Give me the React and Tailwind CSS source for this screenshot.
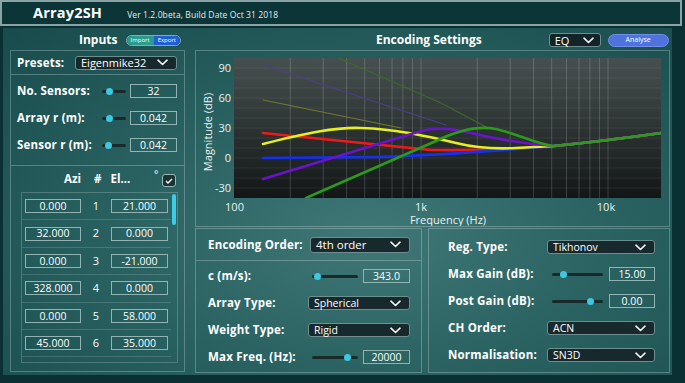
import React from "react";

const F = { fontFamily: '"Open Sans", "Liberation Sans", sans-serif' };

function Chevron({ className = "" }) {
  return (
    <svg width="11" height="7" viewBox="0 0 11 7" className={className}>
      <path d="M1 1.2 L5.5 5.5 L10 1.2" fill="none" stroke="#f2f6f6" strokeWidth="1.6" strokeLinecap="round" strokeLinejoin="round" />
    </svg>
  );
}

function Dropdown({ label, w, h = "h-[14px]", text = "text-[10.5px]" }) {
  return (
    <div className={`${w} ${h} ${text} flex items-center justify-between rounded-[3px] border border-[#6f8e8f] bg-[#18292d] pl-[5px] pr-[8px] text-white`}>
      <span className="leading-none">{label}</span>
      <Chevron />
    </div>
  );
}

function ValueBox({ value, w }) {
  return (
    <div className={`${w} h-[14px] flex items-center justify-center border border-[#93b2b2] text-[10.5px] leading-none text-white`}>
      {value}
    </div>
  );
}

function Slider({ w, knob }) {
  return (
    <div className={`${w} relative h-[7px] flex items-center`}>
      <div className="h-[3px] w-full rounded-full bg-[#1a2a2b]" />
      <div className="absolute top-0 h-[7px] w-[7px] rounded-full bg-[#3cc8e2]" style={{ left: knob }} />
    </div>
  );
}

const fx = (f) => 38 + (Math.log10(f) - 2) * 187;

function Graph() {
  const vlines = [];
  for (let d = 100; d <= 1000; d *= 10) {
    for (let m = 1; m <= 9; m++) {
      const f = d * m;
      if (f === 100) continue;
      vlines.push(fx(f));
    }
  }
  vlines.push(fx(10000));
  const hlines = [];
  for (let db = 90; db > -40; db -= 10) hlines.push(7 + (100 - db));
  const tail = " C 390,92 430,87 465,82";
  return (
    <svg width="473" height="175" className="block">
      <defs>
        <linearGradient id="pbg" x1="0" y1="0" x2="0" y2="1">
          <stop offset="0" stopColor="#475050" />
          <stop offset="1" stopColor="#121616" />
        </linearGradient>
        <clipPath id="pc">
          <rect x="38" y="7" width="427" height="140" />
        </clipPath>
      </defs>
      <rect x="38" y="7" width="427" height="140" fill="url(#pbg)" />
      {hlines.map((y) => (
        <line key={y} x1="38" x2="465" y1={y} y2={y} stroke="#ffffff" strokeOpacity="0.07" />
      ))}
      {vlines.map((x) => (
        <line key={x} x1={x} x2={x} y1="7" y2="147" stroke="#ffffff" strokeOpacity="0.17" />
      ))}
      <g clipPath="url(#pc)" fill="none" strokeLinecap="round">
        <path d="M67,49 L205,77" stroke="#707a2c" strokeWidth="1.2" />
        <path d="M67,14 L250,74" stroke="#4d3f8c" strokeWidth="1.2" />
        <path d="M140,6 L245,52 L292,77" stroke="#3d6a2c" strokeWidth="1.2" />
        <path d={"M67,82 L235,99 C 300,100 330,97 358,95" + tail} stroke="#f01818" strokeWidth="2.6" />
        <path d={"M67,107 L180,106 C 250,104 300,100 358,95" + tail} stroke="#1530f2" strokeWidth="2.6" />
        <path d={"M67,93 C 110,82 140,76 165,77 C 200,78 230,85 260,92 C 280,97 300,98 320,97 L358,95" + tail} stroke="#e6f01e" strokeWidth="2.6" />
        <path d={"M67,128 L225,80 C 240,76 255,77 275,82 C 300,88 330,93 358,95" + tail} stroke="#6a14c8" strokeWidth="2.6" />
        <path d={"M110,147 L240,90 C 265,78 285,75 300,78 C 325,84 340,93 358,95" + tail} stroke="#2e9a1c" strokeWidth="2.6" />
      </g>
      <g fill="#e9f0f0" fontSize="11" style={F}>
        {[90, 60, 30, 0, -30].map((v) => (
          <text key={v} x="35" y={7 + (100 - v) + 4} textAnchor="end">{v}</text>
        ))}
        <text x="38.5" y="160" textAnchor="middle">100</text>
        <text x="225" y="160" textAnchor="middle">1k</text>
        <text x="410" y="160" textAnchor="middle">10k</text>
        <text x="252" y="173" textAnchor="middle">Frequency (Hz)</text>
        <text x="0" y="0" textAnchor="middle" transform="translate(16,81) rotate(-90)">Magnitude (dB)</text>
      </g>
    </svg>
  );
}

const rows = [
  ["0.000", 1, "21.000"],
  ["32.000", 2, "0.000"],
  ["0.000", 3, "-21.000"],
  ["328.000", 4, "0.000"],
  ["0.000", 5, "58.000"],
  ["45.000", 6, "35.000"],
];

const lbl = "text-[11.5px] font-bold tracking-[0.2px] whitespace-nowrap";

export default function App() {
  return (
    <div className="relative h-[383px] w-[685px] overflow-hidden bg-[#0b3034] text-white" style={F}>
      {/* title bar */}
      <div className="flex h-[26px] w-[682px] items-center border-2 border-[#8aa4a5] bg-[#0c3538]">
        <span className="ml-[31px] text-[14.5px] font-bold tracking-[0.2px]">Array2SH</span>
        <span className="ml-[25px] mt-[4px] text-[8.5px] tracking-[0.1px] text-[#e4ecec]">Ver 1.2.0beta, Build Date Oct 31 2018</span>
      </div>

      {/* body */}
      <div className="ml-[3px] mt-[2px] flex h-[347px] w-[669px] gap-[10px] bg-[radial-gradient(ellipse_at_55%_60%,#3f7876_0%,#2c6564_40%,#184b4c_100%)] pl-[7px]">
        {/* left column */}
        <div className="flex w-[175px] flex-col">
          <div className="flex h-[22px] items-center pt-[2px]">
            <span className="ml-[69px] text-[12px] font-bold">Inputs</span>
            <div className="ml-[8px] flex h-[11px] overflow-hidden rounded-full border border-[#7fb0b0] text-[6px] leading-none">
              <span className="flex items-center bg-[#2b9c8b] px-[4px]">Import</span>
              <span className="flex items-center bg-[#1f5fd6] px-[4px]">Export</span>
            </div>
          </div>
          <div className="flex h-[322px] flex-col border border-[#ffffff]/25">
            <div className="flex h-[24px] items-center border-b border-[#ffffff]/25 pl-[6px] pr-[7px]">
              <span className={`w-[58px] ${lbl}`}>Presets:</span>
              <Dropdown label="Eigenmike32" w="w-[102px]" text="text-[11px]" />
            </div>
            <div className="flex h-[91px] flex-col gap-[13px] border-b border-[#ffffff]/25 pl-[6px] pr-[7px] pt-[9px]">
              {[
                ["No. Sensors:", "32", 4],
                ["Array r (m):", "0.042", 4],
                ["Sensor r (m):", "0.042", 3],
              ].map(([l, v, k]) => (
                <div key={l} className="flex h-[14px] items-center">
                  <span className={`w-[85px] ${lbl}`}>{l}</span>
                  <Slider w="w-[24px]" knob={k} />
                  <div className="ml-[4px]"><ValueBox value={v} w="w-[47px]" /></div>
                </div>
              ))}
            </div>
            <div className="flex flex-col pl-[10px] pr-[7px]">
              <div className="relative flex h-[26px] items-center text-[11.5px] font-bold">
                <span className="ml-[43px]">Azi</span>
                <span className="ml-[13px]">#</span>
                <span className="ml-[9px]">El...</span>
                <span className="absolute left-[133px] top-[1px] text-[10px] font-normal">°</span>
                <div className="absolute left-[141px] top-[8px] flex h-[13px] w-[14px] items-center justify-center rounded-[3px] border border-[#9bb8b8] bg-[#1a3436]">
                  <svg width="8" height="6" viewBox="0 0 8 6">
                    <path d="M1 3 L3 5 L7 1" fill="none" stroke="#fff" strokeWidth="1.3" />
                  </svg>
                </div>
              </div>
              <div className="relative h-[171px] w-[157px] overflow-hidden border border-[#ffffff]/20">
                <div className="absolute right-[1px] top-[1px] h-[31px] w-[4px] rounded-full bg-[#3ccde6]" />
                {rows.map(([a, n, e]) => (
                  <div key={n} className="flex h-[27.4px] w-[149px] items-center border-b border-[#ffffff]/15 pl-[3px]">
                    <ValueBox value={a} w="w-[56px]" />
                    <span className="w-[30px] text-center text-[11px]">{n}</span>
                    <ValueBox value={e} w="w-[57px]" />
                  </div>
                ))}
              </div>
            </div>
          </div>
        </div>

        {/* right column */}
        <div className="flex w-[475px] flex-col">
          <div className="relative flex h-[22px] items-center pt-[2px]">
            <span className="ml-[181px] text-[12px] font-bold">Encoding Settings</span>
            <div className="ml-[67px] flex h-[14px] w-[52px] items-center justify-between rounded-[3px] border border-[#6f8e8f] bg-[#132428] pl-[5px] pr-[6px] text-[11px]">
              <span className="leading-none">EQ</span>
              <Chevron />
            </div>
            <div className="ml-[7px] flex h-[13px] w-[61px] items-center justify-center rounded-full border border-[#6f8ee8] bg-[#4f72dc] text-[7px]">
              Analyse
            </div>
          </div>
          <div className="h-[177px] border border-[#ffffff]/25">
            <Graph />
          </div>
          <div className="mt-[1px] flex h-[145px] gap-[6px]">
            <div className="flex w-[227px] flex-col border border-[#ffffff]/25 pl-[12px] pr-[11px]">
              <div className="-ml-[12px] -mr-[11px] flex h-[32px] items-center justify-between border-b border-[#ffffff]/25 pl-[12px] pr-[11px]">
                <span className={lbl}>Encoding Order:</span>
                <Dropdown label="4th order" w="w-[100px]" h="h-[16px]" text="text-[11.5px]" />
              </div>
              <div className="flex flex-col gap-[13px] pt-[8px]">
                <div className="flex h-[14px] items-center">
                  <span className={`w-[104px] ${lbl}`}>c (m/s):</span>
                  <Slider w="w-[46px]" knob={2} />
                  <div className="ml-[5px]"><ValueBox value="343.0" w="w-[47px]" /></div>
                </div>
                <div className="flex h-[14px] items-center justify-between">
                  <span className={lbl}>Array Type:</span>
                  <Dropdown label="Spherical" w="w-[102px]" />
                </div>
                <div className="flex h-[14px] items-center justify-between">
                  <span className={lbl}>Weight Type:</span>
                  <Dropdown label="Rigid" w="w-[102px]" />
                </div>
                <div className="flex h-[14px] items-center">
                  <span className={`w-[104px] ${lbl}`}>Max Freq. (Hz):</span>
                  <Slider w="w-[46px]" knob={32} />
                  <div className="ml-[5px]"><ValueBox value="20000" w="w-[47px]" /></div>
                </div>
              </div>
            </div>
            <div className="flex w-[242px] flex-col gap-[13px] border border-[#ffffff]/25 pl-[19px] pr-[14px] pt-[11px]">
              <div className="flex h-[14px] items-center justify-between">
                <span className={lbl}>Reg. Type:</span>
                <Dropdown label="Tikhonov" w="w-[108px]" />
              </div>
              <div className="flex h-[14px] items-center">
                <span className={`w-[104px] ${lbl}`}>Max Gain (dB):</span>
                <Slider w="w-[51px]" knob={8} />
                <div className="ml-[6px]"><ValueBox value="15.00" w="w-[46px]" /></div>
              </div>
              <div className="flex h-[14px] items-center">
                <span className={`w-[104px] ${lbl}`}>Post Gain (dB):</span>
                <Slider w="w-[51px]" knob={35} />
                <div className="ml-[6px]"><ValueBox value="0.00" w="w-[46px]" /></div>
              </div>
              <div className="flex h-[14px] items-center justify-between">
                <span className={lbl}>CH Order:</span>
                <Dropdown label="ACN" w="w-[108px]" />
              </div>
              <div className="flex h-[14px] items-center justify-between">
                <span className={lbl}>Normalisation:</span>
                <Dropdown label="SN3D" w="w-[108px]" />
              </div>
            </div>
          </div>
        </div>
      </div>
    </div>
  );
}
